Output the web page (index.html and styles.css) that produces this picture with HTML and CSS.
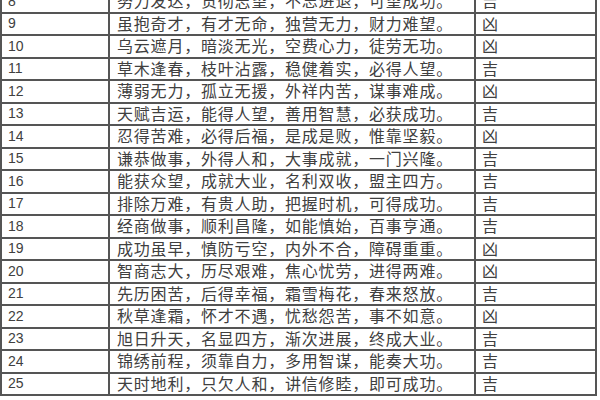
FILE: index.html
```html
<!DOCTYPE html>
<html lang="zh">
<head>
<meta charset="utf-8">
<link rel="stylesheet" href="styles.css">
</head>
<body>
<div class="sheet">
  <div class="num">8</div><div class="txt">努力发达，贯彻志望，不忘进退，可望成功。</div><div class="res">吉</div>
  <div class="num">9</div><div class="txt">虽抱奇才，有才无命，独营无力，财力难望。</div><div class="res">凶</div>
  <div class="num">10</div><div class="txt">乌云遮月，暗淡无光，空费心力，徒劳无功。</div><div class="res">凶</div>
  <div class="num">11</div><div class="txt">草木逢春，枝叶沾露，稳健着实，必得人望。</div><div class="res">吉</div>
  <div class="num">12</div><div class="txt">薄弱无力，孤立无援，外祥内苦，谋事难成。</div><div class="res">凶</div>
  <div class="num">13</div><div class="txt">天赋吉运，能得人望，善用智慧，必获成功。</div><div class="res">吉</div>
  <div class="num">14</div><div class="txt">忍得苦难，必得后福，是成是败，惟靠坚毅。</div><div class="res">凶</div>
  <div class="num">15</div><div class="txt">谦恭做事，外得人和，大事成就，一门兴隆。</div><div class="res">吉</div>
  <div class="num">16</div><div class="txt">能获众望，成就大业，名利双收，盟主四方。</div><div class="res">吉</div>
  <div class="num">17</div><div class="txt">排除万难，有贵人助，把握时机，可得成功。</div><div class="res">吉</div>
  <div class="num">18</div><div class="txt">经商做事，顺利昌隆，如能慎始，百事亨通。</div><div class="res">吉</div>
  <div class="num">19</div><div class="txt">成功虽早，慎防亏空，内外不合，障碍重重。</div><div class="res">凶</div>
  <div class="num">20</div><div class="txt">智商志大，历尽艰难，焦心忧劳，进得两难。</div><div class="res">凶</div>
  <div class="num">21</div><div class="txt">先历困苦，后得幸福，霜雪梅花，春来怒放。</div><div class="res">吉</div>
  <div class="num">22</div><div class="txt">秋草逢霜，怀才不遇，忧愁怨苦，事不如意。</div><div class="res">凶</div>
  <div class="num">23</div><div class="txt">旭日升天，名显四方，渐次进展，终成大业。</div><div class="res">吉</div>
  <div class="num">24</div><div class="txt">锦绣前程，须靠自力，多用智谋，能奏大功。</div><div class="res">吉</div>
  <div class="num">25</div><div class="txt">天时地利，只欠人和，讲信修睦，即可成功。</div><div class="res">吉</div>
</div>
</body>
</html>
```

FILE: styles.css
```css
html, body {
  margin: 0;
  padding: 0;
  background: #ffffff;
}
body {
  width: 600px;
  height: 400px;
  overflow: hidden;
}
.sheet {
  display: grid;
  grid-template-columns: 108px 366px 121px;
  grid-auto-rows: 22.5px;
  margin-top: -9px;
  border-left: 2px solid #555555;
  width: max-content;
}
.sheet > div {
  box-sizing: border-box;
  border-right: 2px solid #555555;
  border-bottom: 2px solid #555555;
  display: flex;
  align-items: center;
  color: #404040;
  white-space: nowrap;
  line-height: 1;
}
.num {
  padding-left: 6px;
  font-family: "Liberation Sans", "DejaVu Sans", sans-serif;
  font-size: 14px;
  padding-bottom: 1px;
}
.txt, .res {
  font-family: "Noto Sans CJK SC", "Noto Sans", sans-serif;
  font-size: 16px;
  letter-spacing: 0.8px;
  padding-bottom: 2px;
}
.txt {
  padding-left: 7px;
}
.res {
  padding-left: 6px;
}
```
